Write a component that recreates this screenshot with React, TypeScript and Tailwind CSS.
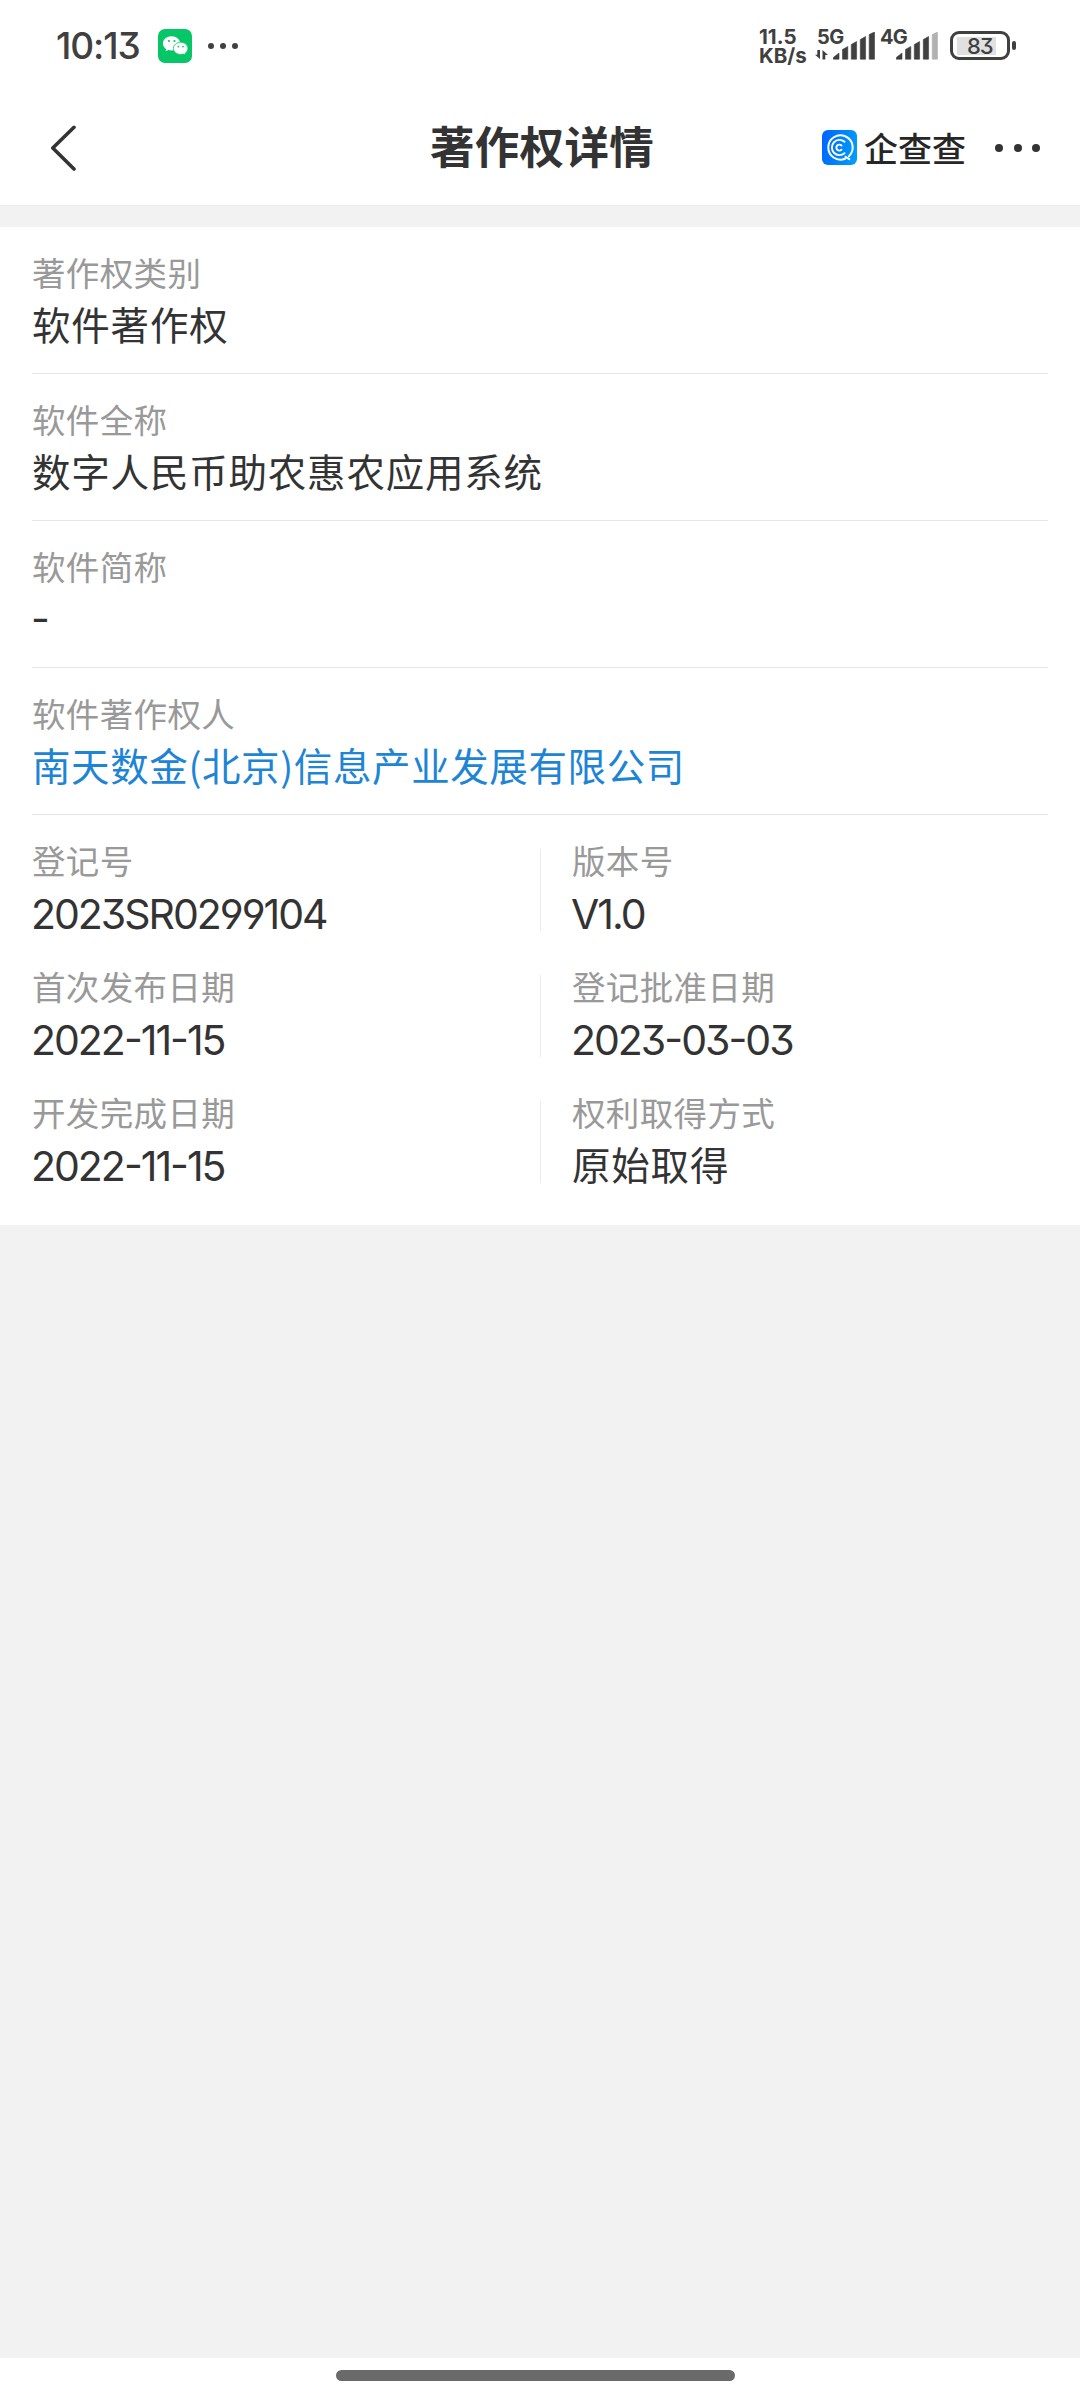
const CJK = "font-['Noto_Sans_CJK_SC',sans-serif]";
const LATIN = "font-['Inter','Noto_Sans_CJK_SC',sans-serif] [font-feature-settings:'cv03','cv04','cv09','case']";

type Kind = 'cjk' | 'latin' | 'link';

function Field({ label, value, kind = 'cjk' }: { label: string; value: string; kind?: Kind }) {
  return (
    <>
      <div className={`${CJK} h-[50px] text-[33.500px] leading-[48px] tracking-[0.350px] text-[#999999] whitespace-nowrap`}>{label}</div>
      {kind === 'latin' ? (
        <div className={`${LATIN} -ml-px h-14 text-[41px] leading-[56px] tracking-[-2px] text-[#333333] whitespace-nowrap`}>
          {value}
        </div>
      ) : (
        <div
          className={`${CJK} h-14 text-[38.500px] leading-[50px] whitespace-nowrap ${
            kind === 'link' ? 'tracking-[0.600px] text-[#1d84d6]' : 'tracking-[0.800px] text-[#333333]'
          }`}
        >
          {value}
        </div>
      )}
    </>
  );
}

function Row({ label, value, kind }: { label: string; value: string; kind?: Kind }) {
  return (
    <div className="h-[147px] border-b border-[#e6e6e6] pt-[21px]">
      <Field label={label} value={value} kind={kind} />
    </div>
  );
}

function Signal({ active }: { active: number }) {
  const bars = [
    'M0.3 27.2 L0.3 25.5 L6 21 L6 27.2Z',
    'M9.5 27.2 V17.5 L14.8 14.5 V27.2Z',
    'M18.3 27.2 V12.5 L23.6 9.5 V27.2Z',
    'M27.3 27.2 V7.5 L32.6 4.5 V27.2Z',
    'M36.2 27.2 V2.5 L41.5 0 V27.2Z',
  ];
  return (
    <svg width="42" height="28" viewBox="0 0 42 28" className="block">
      {bars.map((d, i) => (
        <path key={d} d={d} fill={i < active ? '#404040' : '#b2b2b2'} stroke={i < active ? '#404040' : '#b2b2b2'} strokeWidth="0.6" strokeLinejoin="round" />
      ))}
    </svg>
  );
}

function StatusBar() {
  return (
    <div className="flex h-[92px] items-start pl-[56px] text-[#404040]">
      <div className="mt-[22px] w-[102px] font-['Inter',sans-serif] text-[37px] leading-[48px] font-medium tracking-[-1.1px] [font-feature-settings:'cv09']">
        10:13
      </div>
      <svg width="34" height="34" viewBox="0 0 34 34" className="mt-[29px]">
        <rect width="34" height="34" rx="7" fill="#07c668" />
        <path d="M13.6 7.2c-4.9 0-8.7 3.2-8.7 7.2 0 2.2 1.2 4.2 3.2 5.5l-.4 2.3 2.6-1.3c1 .3 2.1.5 3.3.5 4.8 0 8.6-3.200 8.600-7s-3.800-7.200-8.600-7.200z" fill="#fff" />
        <path d="M22.700 13.300c-4 0-7.300 2.700-7.300 6.100s3.300 6 7.300 6c1 0 1.900-.2 2.700-.4l2.200 1.100-.4-1.900c1.700-1.100 2.700-2.800 2.700-4.700 0-3.500-3.200-6.200-7.200-6.200z" fill="#fff" stroke="#07c668" strokeWidth="0.8" />
        <g fill="#07c668">
          <circle cx="11" cy="12" r="1.100" />
          <circle cx="16.500" cy="12" r="1.100" />
          <circle cx="20.400" cy="17.600" r="0.900" />
          <circle cx="25" cy="17.600" r="0.900" />
        </g>
      </svg>
      <div className="mt-[43px] ml-4 flex gap-1.5">
        <span className="size-1.5 rounded-full bg-[#404040]" />
        <span className="size-1.5 rounded-full bg-[#404040]" />
        <span className="size-1.5 rounded-full bg-[#404040]" />
      </div>
      <div className="mt-[27px] ml-[521px] w-[58px] font-['Inter',sans-serif] text-[20.500px] leading-[19px] font-bold">
        <div>11.5</div>
        <div>KB/s</div>
      </div>
      <div className="relative mt-[32px] h-[28px] w-[58px] pl-[16px]">
        <div className="absolute -top-[7px] left-0 font-['Inter',sans-serif] text-[20px] leading-6 font-bold tracking-[-0.6px]">5G</div>
        <svg width="14" height="10" viewBox="0 0 14 10" className="absolute top-[17.500px] -left-0.5">
          <path d="M5 0v9L0 4.800h2.300V0z M7.500 9.500V0L13 5h-2.700v4.500z" fill="#404040" />
        </svg>
        <Signal active={5} />
      </div>
      <div className="relative ml-[5px] mt-[32px] h-[28px] w-[70px] pl-[16px]">
        <div className="absolute -top-[7px] left-0 font-['Inter',sans-serif] text-[20px] leading-6 font-bold tracking-[-0.8px]">4G</div>
        <Signal active={4} />
      </div>
      <div className="mt-[31px] flex items-center">
        <div className="flex h-[29px] w-[60px] items-center rounded-[9px] border-3 border-[#404040] px-1">
          <div className="h-[18px] w-[39px] bg-[#e0e0e0] pl-2.5 font-['Inter',sans-serif] text-[22px] leading-[19px] font-medium tracking-[-1px] [font-feature-settings:'cv09']">
            83
          </div>
        </div>
        <div className="ml-[2px] h-[9px] w-1 rounded-[2px] bg-[#404040]" />
      </div>
    </div>
  );
}

function BrandLogo() {
  return (
    <svg width="35" height="35" viewBox="0 0 35 35">
      <defs>
        <linearGradient id="brand" x1="0" y1="0.400" x2="1" y2="0.600">
          <stop offset="0" stopColor="#0068ff" />
          <stop offset="1" stopColor="#009dfb" />
        </linearGradient>
      </defs>
      <rect width="35" height="35" rx="6" fill="url(#brand)" />
      <g fill="none" stroke="#fff" strokeLinecap="round">
        <path d="M27 26.200A12.200 12.200 0 1 0 23 28.800M23.500 26.800L27.300 29.200" strokeWidth="2" />
        <path d="M22.500 11.800A7.600 7.600 0 1 0 22.500 23.200" strokeWidth="1.900" />
        <path d="M19.500 15.500a3 3 0 1 0 0 4.200" strokeWidth="1.900" />
      </g>
    </svg>
  );
}

function Header() {
  return (
    <div className="grid h-[113px] grid-cols-[1fr_auto_1fr] items-start">
      <svg width="26" height="48" viewBox="0 0 26 48" className="mt-[32px] ml-[50px]">
        <path d="M24 3.300L2.800 24L24 45" fill="none" stroke="#333333" strokeWidth="3.600" strokeLinecap="round" strokeLinejoin="round" />
      </svg>
      <h1 className={`${CJK} mt-[24px] pl-[4px] text-[44.500px] leading-[58px] font-bold tracking-[0.300px] text-[#333333]`}>著作权详情</h1>
      <div className="mt-[38px] flex h-[35px] items-center justify-end pr-10">
        <BrandLogo />
        <span className={`${CJK} ml-[7px] w-[102px] text-[34px] leading-[33px] font-medium text-[#262626] whitespace-nowrap`}>企查查</span>
        <span className="ml-[29px] flex gap-[10.500px]">
          <span className="size-2 rounded-full bg-[#333333]" />
          <span className="size-2 rounded-full bg-[#333333]" />
          <span className="size-2 rounded-full bg-[#333333]" />
        </span>
      </div>
    </div>
  );
}

const PAIRS: [string, string, Kind, string, string, Kind][] = [
  ['登记号', '2023SR0299104', 'latin', '版本号', 'V1.0', 'latin'],
  ['首次发布日期', '2022-11-15', 'latin', '登记批准日期', '2023-03-03', 'latin'],
  ['开发完成日期', '2022-11-15', 'latin', '权利取得方式', '原始取得', 'cjk'],
];

export default function App() {
  return (
    <div className="flex h-[2400px] w-[1080px] flex-col overflow-hidden bg-[#f2f2f2]">
      <div className="bg-white">
        <StatusBar />
        <Header />
      </div>
      <div className="h-[22px] border-t border-[#ebebeb]" />
      <div className="h-[998px] bg-white px-8">
        <Row label="著作权类别" value="软件著作权" />
        <Row label="软件全称" value="数字人民币助农惠农应用系统" />
        <Row label="软件简称" value="-" kind="latin" />
        <Row label="软件著作权人" value="南天数金(北京)信息产业发展有限公司" kind="link" />
        {PAIRS.map(([l1, v1, k1, l2, v2, k2]) => (
          <div key={l1} className="flex h-[126px]">
            <div className="w-[508px] pt-[21px]">
              <Field label={l1} value={v1} kind={k1} />
            </div>
            <div className="mt-[34px] h-[82px] w-px bg-[#ebebeb]" />
            <div className="pt-[21px] pl-[31px]">
              <Field label={l2} value={v2} kind={k2} />
            </div>
          </div>
        ))}
      </div>
      <div className="mt-auto h-[42px] bg-white pt-3">
        <div className="ml-[336px] h-[11px] w-[399px] rounded-full bg-[#6a6a6a]" />
      </div>
    </div>
  );
}
